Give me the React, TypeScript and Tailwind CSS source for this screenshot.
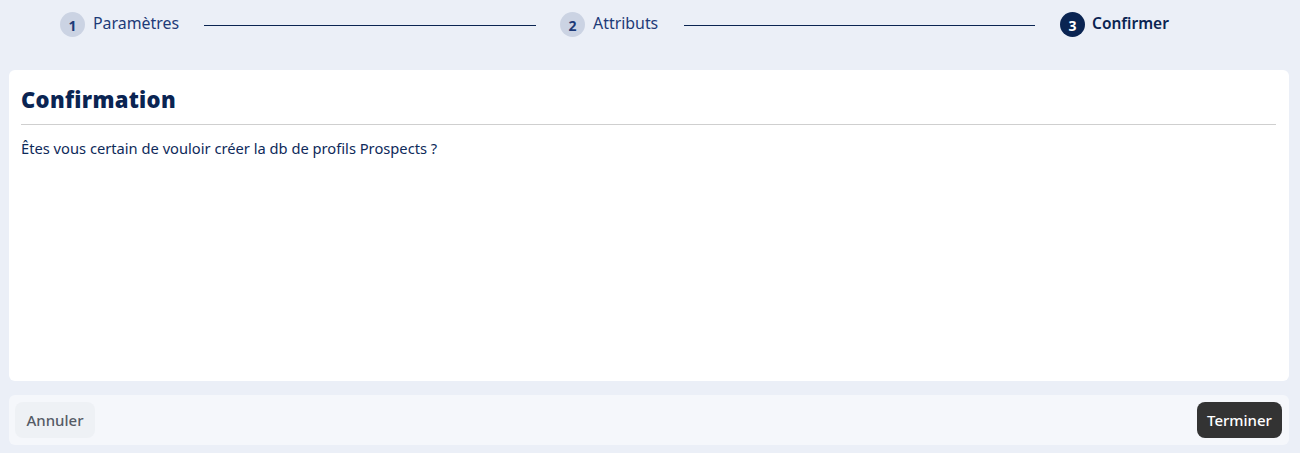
import React from "react";

function Circle({ n, active }: { n: number; active?: boolean }) {
  return (
    <div
      className={
        active
          ? "w-[25px] h-[25px] shrink-0 rounded-full bg-[#0a2452] text-white flex items-center justify-center text-[14px] font-bold"
          : "w-[25px] h-[25px] shrink-0 rounded-full bg-[#cbd3e3] text-[#1d3a78] flex items-center justify-center text-[14px] font-bold"
      }
    >
      <span className="mt-[2px]">{n}</span>
    </div>
  );
}

export default function App() {
  return (
    <div
      className="w-[1300px] h-[453px] bg-[#ebeff7] flex flex-col"
      style={{ fontFamily: "'Noto Sans', 'Open Sans', sans-serif" }}
    >
      <div className="h-[70px] flex items-start pt-[12px] pl-[60px]">
        <div className="w-[500px] flex items-center">
          <Circle n={1} />
          <span className="ml-[8px] text-[15.9px] text-[#1d3a78] -mt-[1px] whitespace-nowrap">Paramètres</span>
          <div className="flex-1 h-px bg-[#0a2452] mt-[2px] ml-[25px] mr-[24px]" />
        </div>
        <div className="w-[500px] flex items-center">
          <Circle n={2} />
          <span className="ml-[8px] text-[15.9px] text-[#1d3a78] -mt-[1px] whitespace-nowrap">Attributs</span>
          <div className="flex-1 h-px bg-[#0a2452] mt-[2px] ml-[26px] mr-[25px]" />
        </div>
        <div className="flex items-center">
          <Circle n={3} active />
          <span className="ml-[7px] text-[15.5px] font-semibold text-[#0a2452] -mt-[1px] whitespace-nowrap">Confirmer</span>
        </div>
      </div>
      <div className="ml-[9px] mr-[11px] h-[311px] bg-white rounded-[6px] pl-[12px] pr-[13px] pt-[14px]">
        <h1
          className="text-[22px] font-extrabold text-[#0a2452] leading-[30px] tracking-[0.3px]"
          style={{ fontFamily: "'Open Sans', sans-serif" }}
        >
          Confirmation
        </h1>
        <div className="h-px bg-[#cfcfcf] mt-[10px]" />
        <p className="mt-[13px] text-[14.7px] text-[#0e2a5a] leading-[20px]">
          Êtes vous certain de vouloir créer la db de profils Prospects ?
        </p>
      </div>
      <div className="ml-[9px] mr-[11px] mt-[14px] h-[50px] bg-[#f5f7fb] rounded-[6px] flex items-center justify-between pl-[6px] pr-[7px]">
        <button className="h-[36px] w-[80px] rounded-[8px] bg-[#eef1f5] text-[#555b66] text-[15px] font-medium">
          Annuler
        </button>
        <button className="h-[36px] w-[85px] rounded-[8px] bg-[#333333] text-white text-[15px] font-medium">
          Terminer
        </button>
      </div>
    </div>
  );
}
